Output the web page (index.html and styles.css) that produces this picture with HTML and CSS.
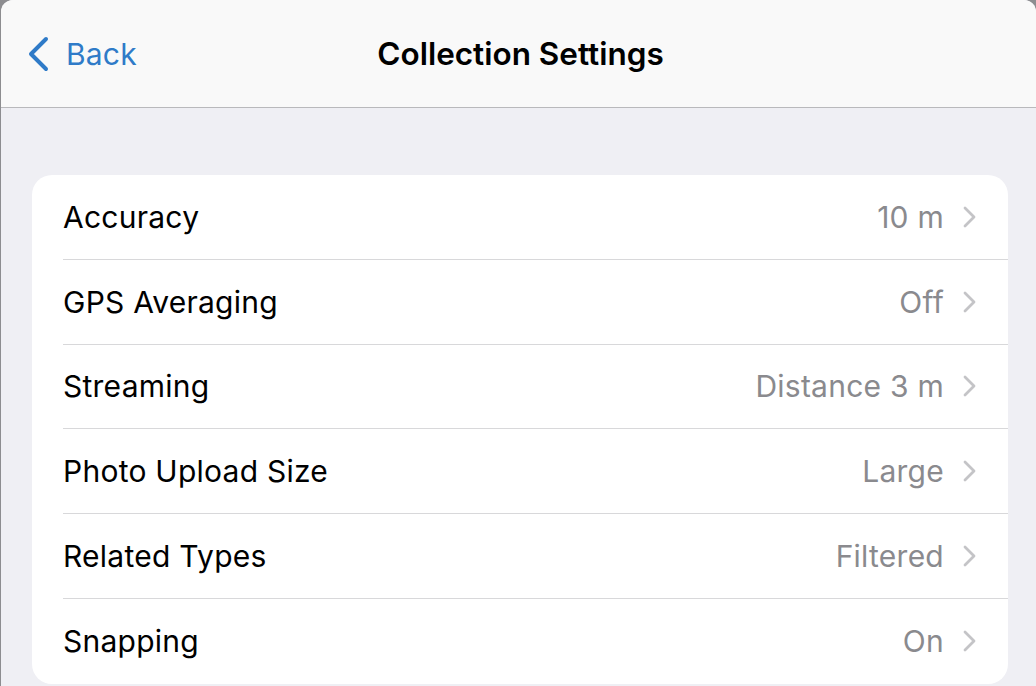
FILE: index.html
```html
<!DOCTYPE html>
<html lang="en">
<head>
<meta charset="utf-8">
<title>Collection Settings</title>
<link rel="stylesheet" href="styles.css">
</head>
<body>
<div class="sheet">
  <header class="navbar">
    <a class="back" href="#">
      <svg class="back-chevron" width="22" height="36" viewBox="0 0 22 36" aria-hidden="true">
        <path d="M19 3 L4 18 L19 33" fill="none" stroke="currentColor" stroke-width="4" stroke-linecap="round" stroke-linejoin="round"/>
      </svg>
      <span>Back</span>
    </a>
    <h1 class="title">Collection Settings</h1>
  </header>
  <main class="content">
    <ul class="group">
      <li class="row"><span class="label">Accuracy</span><span class="value">10 m</span><svg class="chev" width="16" height="24" viewBox="0 0 16 24"><path d="M3 3 L12 12 L3 21" fill="none" stroke="currentColor" stroke-width="2.8" stroke-linecap="round" stroke-linejoin="round"/></svg></li>
      <li class="row"><span class="label">GPS Averaging</span><span class="value">Off</span><svg class="chev" width="16" height="24" viewBox="0 0 16 24"><path d="M3 3 L12 12 L3 21" fill="none" stroke="currentColor" stroke-width="2.8" stroke-linecap="round" stroke-linejoin="round"/></svg></li>
      <li class="row"><span class="label">Streaming</span><span class="value">Distance 3 m</span><svg class="chev" width="16" height="24" viewBox="0 0 16 24"><path d="M3 3 L12 12 L3 21" fill="none" stroke="currentColor" stroke-width="2.8" stroke-linecap="round" stroke-linejoin="round"/></svg></li>
      <li class="row"><span class="label">Photo Upload Size</span><span class="value">Large</span><svg class="chev" width="16" height="24" viewBox="0 0 16 24"><path d="M3 3 L12 12 L3 21" fill="none" stroke="currentColor" stroke-width="2.8" stroke-linecap="round" stroke-linejoin="round"/></svg></li>
      <li class="row"><span class="label">Related Types</span><span class="value">Filtered</span><svg class="chev" width="16" height="24" viewBox="0 0 16 24"><path d="M3 3 L12 12 L3 21" fill="none" stroke="currentColor" stroke-width="2.8" stroke-linecap="round" stroke-linejoin="round"/></svg></li>
      <li class="row"><span class="label">Snapping</span><span class="value">On</span><svg class="chev" width="16" height="24" viewBox="0 0 16 24"><path d="M3 3 L12 12 L3 21" fill="none" stroke="currentColor" stroke-width="2.8" stroke-linecap="round" stroke-linejoin="round"/></svg></li>
    </ul>
  </main>
</div>
</body>
</html>
```
FILE: styles.css
```css
html, body {
  margin: 0;
  padding: 0;
  height: 100%;
  overflow: hidden;
}
body {
  background: #8d8d90;
  font-family: Inter, "Liberation Sans", sans-serif;
  padding-left: 1px;
  box-sizing: border-box;
}
.sheet {
  height: 100%;
  background: #efeff4;
  border-top-left-radius: 12px;
  border-top-right-radius: 12px;
  overflow: hidden;
  display: flex;
  flex-direction: column;
}
.navbar {
  height: 108px;
  flex: none;
  box-sizing: border-box;
  background: #f9f9f9;
  border-bottom: 1px solid #b9b9bc;
  display: flex;
  align-items: center;
  justify-content: center;
  position: relative;
}
.back {
  position: absolute;
  left: 26px;
  top: 0;
  bottom: 0;
  display: flex;
  align-items: center;
  gap: 17px;
  color: #2f7bc8;
  text-decoration: none;
  font-size: 30px;
  letter-spacing: 0.2px;
}
.back-chevron {
  display: block;
}
.title {
  margin: 0;
  margin-left: 4px;
  font-size: 31.5px;
  font-weight: 600;
  color: #000;
}
.content {
  padding: 67px 28px 0 31px;
}
.group {
  list-style: none;
  margin: 0;
  padding: 0;
  background: #fff;
  border-radius: 20px;
}
.row {
  height: 84.75px;
  box-sizing: border-box;
  display: flex;
  align-items: center;
  margin-left: 31px;
  padding-right: 30px;
  border-bottom: 1px solid #d8d8da;
  font-size: 30px;
  letter-spacing: 0.25px;
}
.row:last-child {
  border-bottom: none;
}
.label {
  flex: 1;
  color: #000;
}
.value {
  color: #8a8a8e;
}
.chev {
  margin-left: 18px;
  color: #c4c4c7;
  display: block;
}
```
